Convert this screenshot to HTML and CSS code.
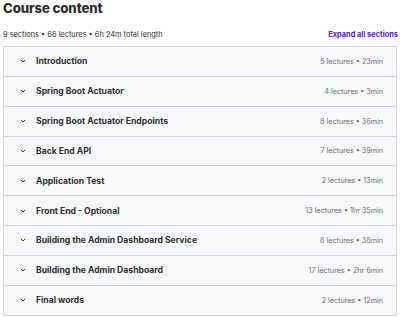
FILE: index.html
```html
<!DOCTYPE html>
<html>
<head>
<meta charset="utf-8">
<link rel="stylesheet" href="styles.css">
</head>
<body>
<div class="page">
  <h2 class="title">Course content</h2>
  <div class="meta">
    <span class="summary">9 sections • 66 lectures • 6h 24m total length</span>
    <span class="expand">Expand all sections</span>
  </div>
  <div class="sections">
    <div class="row"><svg class="chev" viewBox="0 0 10 6"><path d="M1.5 1.2 L5 4.6 L8.5 1.2" fill="none" stroke="#2d2f31" stroke-width="1.6"/></svg><span class="name">Introduction</span><span class="info">5 lectures • 23min</span></div>
    <div class="row"><svg class="chev" viewBox="0 0 10 6"><path d="M1.5 1.2 L5 4.6 L8.5 1.2" fill="none" stroke="#2d2f31" stroke-width="1.6"/></svg><span class="name">Spring Boot Actuator</span><span class="info">4 lectures • 3min</span></div>
    <div class="row"><svg class="chev" viewBox="0 0 10 6"><path d="M1.5 1.2 L5 4.6 L8.5 1.2" fill="none" stroke="#2d2f31" stroke-width="1.6"/></svg><span class="name">Spring Boot Actuator Endpoints</span><span class="info">8 lectures • 36min</span></div>
    <div class="row"><svg class="chev" viewBox="0 0 10 6"><path d="M1.5 1.2 L5 4.6 L8.5 1.2" fill="none" stroke="#2d2f31" stroke-width="1.6"/></svg><span class="name">Back End API</span><span class="info">7 lectures • 39min</span></div>
    <div class="row"><svg class="chev" viewBox="0 0 10 6"><path d="M1.5 1.2 L5 4.6 L8.5 1.2" fill="none" stroke="#2d2f31" stroke-width="1.6"/></svg><span class="name">Application Test</span><span class="info">2 lectures • 13min</span></div>
    <div class="row"><svg class="chev" viewBox="0 0 10 6"><path d="M1.5 1.2 L5 4.6 L8.5 1.2" fill="none" stroke="#2d2f31" stroke-width="1.6"/></svg><span class="name">Front End - Optional</span><span class="info">13 lectures • 1hr 35min</span></div>
    <div class="row"><svg class="chev" viewBox="0 0 10 6"><path d="M1.5 1.2 L5 4.6 L8.5 1.2" fill="none" stroke="#2d2f31" stroke-width="1.6"/></svg><span class="name">Building the Admin Dashboard Service</span><span class="info">8 lectures • 38min</span></div>
    <div class="row"><svg class="chev" viewBox="0 0 10 6"><path d="M1.5 1.2 L5 4.6 L8.5 1.2" fill="none" stroke="#2d2f31" stroke-width="1.6"/></svg><span class="name">Building the Admin Dashboard</span><span class="info">17 lectures • 2hr 6min</span></div>
    <div class="row"><svg class="chev" viewBox="0 0 10 6"><path d="M1.5 1.2 L5 4.6 L8.5 1.2" fill="none" stroke="#2d2f31" stroke-width="1.6"/></svg><span class="name">Final words</span><span class="info">2 lectures • 12min</span></div>
  </div>
</div>
</body>
</html>
```
FILE: styles.css
```css
html, body {
  margin: 0;
  padding: 0;
  background: #ffffff;
}
body {
  font-family: Inter, "Noto Sans", sans-serif;
  color: #2d2f31;
}
.page {
  width: 400px;
  height: 317px;
  overflow: hidden;
  padding: 0 2px 0 3px;
  box-sizing: border-box;
}
.title {
  margin: 0;
  font-size: 13.2px;
  font-weight: 800;
  line-height: 16px;
  letter-spacing: -0.1px;
}
.meta {
  display: flex;
  justify-content: space-between;
  align-items: center;
  margin-top: 12px;
  height: 12px;
  margin-bottom: 6px;
}
.summary {
  font-size: 7.4px;
  color: #2d2f31;
}
.expand {
  font-size: 7.4px;
  font-weight: 700;
  color: #5624d0;
}
.sections {
  border: 1px solid #d1d7dc;
  border-bottom: none;
  margin-right: 1px;
}
.row {
  display: flex;
  align-items: center;
  height: 28.85px;
  background: #f7f9fa;
  border-bottom: 1px solid #d1d7dc;
  padding: 0 13px 0 16px;
}
.chev {
  width: 6px;
  height: 4px;
  margin-right: 10px;
}
.name {
  font-size: 8.6px;
  font-weight: 700;
  flex: 1;
}
.info {
  font-size: 7.2px;
  color: #6a6f73;
}
```
